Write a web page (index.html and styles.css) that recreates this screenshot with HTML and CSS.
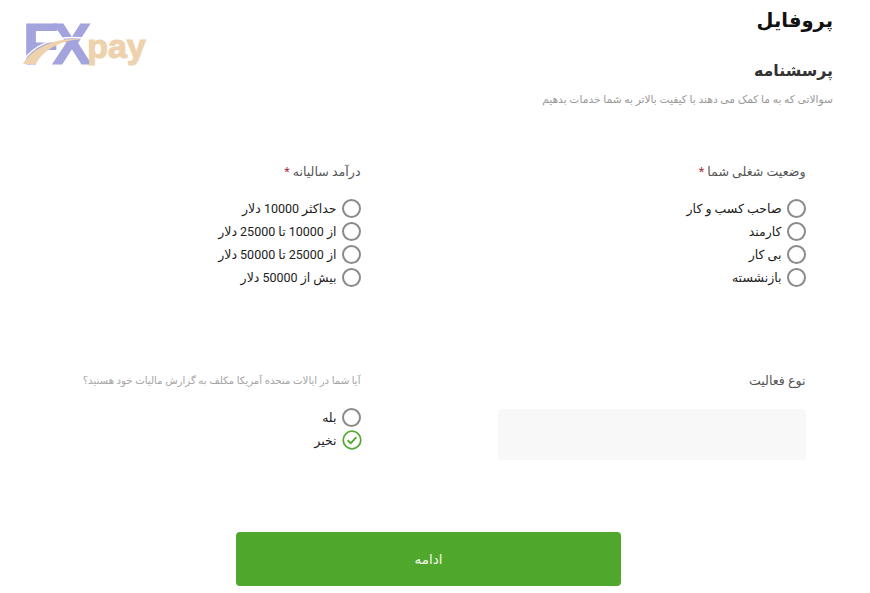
FILE: index.html
```html
<!DOCTYPE html>
<html lang="fa" dir="rtl">
<head>
  <meta charset="UTF-8" />
  <meta name="viewport" content="width=device-width, initial-scale=1.0"/>
  <title>پروفایل</title>
  <link rel="stylesheet" href="styles.css">
</head>
<body>

  <header class="top">
    <div class="titles">
      <h1>پروفایل</h1>
      <h2>پرسشنامه</h2>
      <p class="desc">سوالاتی که به ما کمک می دهند با کیفیت بالاتر به شما خدمات بدهیم</p>
    </div>
    <div class="logo">
      <span class="logo-fx">FX</span>
      <span class="logo-pay">pay</span>
      <svg class="swoosh" viewBox="0 0 62 44" width="62" height="44">
        <path d="M0 42 C8 28 30 15 59 17 C36 19 20 28 13 42 Z" fill="#eed2ae"/>
        <path d="M-1 41 C8 25 30 13 60 16" fill="none" stroke="#fff" stroke-width="1.5"/>
      </svg>
    </div>
  </header>

  <form class="questions">
    <div class="question">
      <div class="label">وضعیت شغلی شما <span class="req">*</span></div>
      <div class="options">
        <label class="option"><span class="radio"></span>صاحب کسب و کار</label>
        <label class="option"><span class="radio"></span>کارمند</label>
        <label class="option"><span class="radio"></span>بی کار</label>
        <label class="option"><span class="radio"></span>بازنشسته</label>
      </div>
    </div>

    <div class="question">
      <div class="label">درآمد سالیانه <span class="req">*</span></div>
      <div class="options">
        <label class="option"><span class="radio"></span>حداکثر 10000 دلار</label>
        <label class="option"><span class="radio"></span>از 10000 تا 25000 دلار</label>
        <label class="option"><span class="radio"></span>از 25000 تا 50000 دلار</label>
        <label class="option"><span class="radio"></span>بیش از 50000 دلار</label>
      </div>
    </div>

    <div class="question">
      <div class="label">نوع فعالیت</div>
      <div class="field"></div>
    </div>

    <div class="question">
      <div class="label hint">آیا شما در ایالات متحده آمریکا مکلف به گزارش مالیات خود هستید؟</div>
      <div class="options">
        <label class="option"><span class="radio"></span>بله</label>
        <label class="option">
          <svg class="radio-on" viewBox="0 0 20 20" width="20" height="20">
            <circle cx="10" cy="10" r="8.8" fill="none" stroke="#55a932" stroke-width="1.7"/>
            <path d="M5.6 10.2 L8.8 13.2 L14.4 7.2" fill="none" stroke="#55a932" stroke-width="1.9"/>
          </svg>نخیر</label>
      </div>
    </div>
  </form>

  <div class="actions">
    <button type="button" class="next">ادامه</button>
  </div>

</body>
</html>
```

FILE: styles.css
```css
* {
  box-sizing: border-box;
}

body {
  margin: 0;
  height: 593px;
  overflow: hidden;
  background-color: #fff;
  font-family: Roboto, "DejaVu Sans", sans-serif;
  color: #333;
}

.top {
  display: flex;
  justify-content: space-between;
  align-items: flex-start;
  padding: 0 37px 0 23px;
}

.titles h1 {
  margin: 0;
  padding-top: 6px;
  font-size: 19.5px;
  line-height: 30px;
  font-weight: bold;
  color: #111;
}

.titles h2 {
  margin: 20px 0 0;
  font-size: 15.8px;
  line-height: 30px;
  font-weight: bold;
  color: #333;
}

.desc {
  margin: 5px 0 0;
  font-size: 10.7px;
  line-height: 18px;
  color: #9a9a9a;
}

.logo {
  position: relative;
  display: flex;
  gap: 2px;
  margin-top: 22px;
  direction: ltr;
  font-family: "Liberation Sans", sans-serif;
  font-weight: bold;
}

.logo-fx {
  font-size: 58px;
  line-height: 44px;
  letter-spacing: -6px;
  color: #a3a3de;
  -webkit-text-stroke: 1.2px #a3a3de;
}

.logo-pay {
  margin-top: 9px;
  font-size: 34px;
  line-height: 30px;
  color: #eed2ae;
  -webkit-text-stroke: 1.2px #eed2ae;
}

.swoosh {
  position: absolute;
  left: 0;
  top: 0;
}

.questions {
  display: grid;
  grid-template-columns: 445px 1fr;
  grid-template-rows: 209px 130px;
  padding: 0 64.5px 0 0;
  margin-top: 53px;
}

.label {
  font-size: 12.6px;
  line-height: 20px;
  color: #555;
}

.hint {
  font-size: 10.2px;
  color: #a5a5a5;
  white-space: nowrap;
}

.req {
  color: #a83246;
}

.options {
  margin-top: 16px;
  display: flex;
  flex-direction: column;
  gap: 3px;
}

.option {
  display: flex;
  align-items: center;
  gap: 5px;
  height: 20px;
  font-size: 12.5px;
  color: #222;
}

.radio {
  width: 19px;
  height: 19px;
  border: 2px solid #8a8a8a;
  border-radius: 50%;
  flex: none;
}

.radio-on {
  flex: none;
  margin-right: -1px;
}

.field {
  width: 308px;
  height: 51px;
  margin-top: 18px;
  background-color: #f8f8f8;
  border-radius: 4px;
}

.actions {
  padding-right: 249px;
  margin-top: 31px;
}

.next {
  display: block;
  width: 385px;
  height: 54px;
  border: none;
  border-radius: 4px;
  background-color: #4fa82b;
  color: #f2f8ee;
  font-family: inherit;
  font-size: 13.5px;
}
```
